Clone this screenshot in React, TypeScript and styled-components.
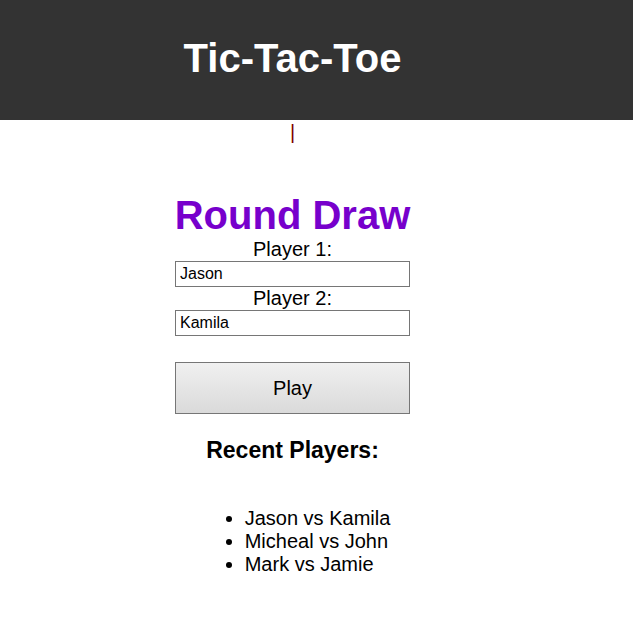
import React from "react";
import styled, { createGlobalStyle } from "styled-components";

const Global = createGlobalStyle`
  body { margin: 0; font-family: "Liberation Sans", Arial, sans-serif; background: #fff; }
`;

const Header = styled.header`
  background: #333333;
  height: 120px;
  display: flex;
  align-items: center;
`;

const Inner = styled.div`
  width: 585px;
  text-align: center;
`;

const Title = styled.h1`
  margin: 0;
  color: #fff;
  font-size: 40px;
  font-weight: bold;
  padding-bottom: 4px;
`;

const Caret = styled.div`
  width: 585px;
  text-align: center;
  color: #800000;
  font-size: 20px;
  line-height: 24px;
  height: 24px;
`;

const Main = styled.main`
  width: 585px;
  display: flex;
  flex-direction: column;
  align-items: center;
  padding-top: 48px;
`;

const Status = styled.h2`
  margin: 0;
  color: #7700cc;
  font-size: 40px;
  font-weight: bold;
  line-height: 46px;
`;

const Label = styled.label`
  font-size: 20px;
  line-height: 23px;
  color: #000;
`;

const Input = styled.input`
  box-sizing: border-box;
  width: 235px;
  height: 26px;
  border: 1px solid #767676;
  padding: 1px 4px;
  font-family: "Liberation Sans", Arial, sans-serif;
  font-size: 16px;
  color: #000;
  outline: none;
`;

const PlayButton = styled.button`
  box-sizing: border-box;
  width: 235px;
  height: 52px;
  margin-top: 26px;
  border: 1px solid #767676;
  background: linear-gradient(#f0f0f0, #dadada);
  font-family: "Liberation Sans", Arial, sans-serif;
  font-size: 20px;
  color: #000;
`;

const Recent = styled.h3`
  margin: 23px 0 0;
  font-size: 23px;
  font-weight: bold;
  line-height: 26px;
`;

const List = styled.ul`
  margin: 44px 0 0;
  padding-left: 50px;
  font-size: 20px;
  line-height: 23px;
  text-align: left;
`;

export default function App() {
  return (
    <>
      <Global />
      <Header>
        <Inner>
          <Title>Tic-Tac-Toe</Title>
        </Inner>
      </Header>
      <Caret>|</Caret>
      <Main>
        <Status>Round Draw</Status>
        <Label>Player 1:</Label>
        <Input defaultValue="Jason" />
        <Label>Player 2:</Label>
        <Input defaultValue="Kamila" />
        <PlayButton>Play</PlayButton>
        <Recent>Recent Players:</Recent>
        <List>
          <li>Jason vs Kamila</li>
          <li>Micheal vs John</li>
          <li>Mark vs Jamie</li>
        </List>
      </Main>
    </>
  );
}
